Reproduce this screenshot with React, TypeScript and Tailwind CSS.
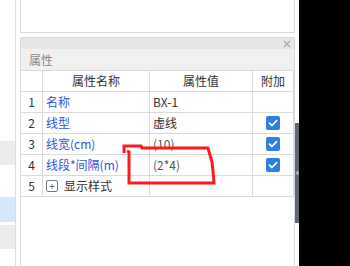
import React from "react";

const font = { fontFamily: '"Noto Sans CJK SC", "Microsoft YaHei", "Liberation Sans", sans-serif' };

function Check() {
  return (
    <div className="w-[14px] h-[14px] rounded-[2px] bg-[#2f7fe0] flex items-center justify-center">
      <svg width="10" height="10" viewBox="0 0 10 10">
        <path d="M1.5 5.2 L4 7.5 L8.6 2.6" stroke="white" strokeWidth="1.7" fill="none" strokeLinecap="round" strokeLinejoin="round" />
      </svg>
    </div>
  );
}

type Row = { n: string; name: React.ReactNode; value: string; check: boolean; valueGray?: boolean };

const rows: Row[] = [
  { n: "1", name: <span className="text-[#2f52e6]">名称</span>, value: "BX-1", check: false },
  { n: "2", name: <span className="text-[#2f52e6]">线型</span>, value: "虚线", check: true },
  { n: "3", name: <span className="text-[#2f52e6]">线宽(cm)</span>, value: "(10)", check: true, valueGray: true },
  { n: "4", name: <span className="text-[#2f52e6]">线段*间隔(m)</span>, value: "(2*4)", check: true, valueGray: true },
  {
    n: "5",
    name: (
      <span className="flex items-center gap-[6px] text-[#333]">
        <span className="w-[12px] h-[12px] border border-[#7a7a7a] rounded-[2px] flex items-center justify-center text-[10px] leading-none text-[#555]">+</span>
        显示样式
      </span>
    ),
    value: "",
    check: false,
  },
];

export default function App() {
  return (
    <div className="relative w-[350px] h-[266px] bg-black flex overflow-hidden text-[12px]" style={font}>
      {/* sidebar */}
      <div className="w-[16px] h-full bg-white border-r border-[#dcdcdc] flex flex-col">
        <div className="h-[141px]" />
        <div className="h-[24px] bg-[#ececec]" />
        <div className="h-[32px]" />
        <div className="h-[25px] bg-[#d5e7fb]" />
        <div className="h-[3px]" />
        <div className="h-[24px] bg-[#ececec]" />
      </div>
      <div className="w-[4px] h-full bg-white" />
      {/* main panel column */}
      <div className="w-[275px] h-full bg-white flex flex-col">
        <div className="h-[33px] border-x border-b border-[#d9d9d9]" />
        <div className="h-[4px]" />
        <div className="flex-1 border-x border-t border-[#d9d9d9] flex flex-col">
          <div className="h-[11px] bg-[#e6e6e6] flex items-center justify-end pr-[3px]">
            <svg width="8" height="8" viewBox="0 0 8 8">
              <path d="M1 1 L7 7 M7 1 L1 7" stroke="#a8a8a8" strokeWidth="1.1" />
            </svg>
          </div>
          <div className="h-[22px] bg-[#f0f0f0] border-b border-[#dadada] flex items-center pl-[8px] text-[#8a8a8a] text-[12px]">
            属性
          </div>
          <div className="w-[273px] text-[#333]">
            <div className="flex h-[21px] border-b border-[#dadada]">
              <div className="w-[22px] border-r border-[#dadada]" />
              <div className="w-[107px] border-r border-[#dadada] flex items-center justify-center">属性名称</div>
              <div className="w-[103px] border-r border-[#dadada] flex items-center justify-center">属性值</div>
              <div className="w-[41px] border-r border-[#dadada] flex items-center justify-center">附加</div>
            </div>
            {rows.map((r) => (
              <div key={r.n} className="flex h-[21px] border-b border-[#dadada]">
                <div className="w-[22px] border-r border-[#dadada] flex items-center justify-center text-[#333]">{r.n}</div>
                <div className="w-[107px] border-r border-[#dadada] flex items-center pl-[3px]">{r.name}</div>
                <div className={`w-[103px] border-r border-[#dadada] flex items-center pl-[3px] ${r.valueGray ? "text-[#555]" : "text-[#333]"}`}>{r.value}</div>
                <div className="w-[41px] border-r border-[#dadada] flex items-center justify-center">{r.check ? <Check /> : null}</div>
              </div>
            ))}
          </div>
        </div>
      </div>
      {/* splitter strip */}
      <div className="w-[4px] h-full bg-white flex flex-col">
        <div className="h-[123px]" />
        <div className="h-[100px] bg-[#5f6a74] flex items-center justify-center">
          <svg width="4" height="6" viewBox="0 0 4 6">
            <path d="M3.5 0.5 L0.5 3 L3.5 5.5 Z" fill="#b9c0c6" />
          </svg>
        </div>
      </div>
      {/* red annotation */}
      <svg className="absolute left-0 top-0 pointer-events-none" width="350" height="266" viewBox="0 0 350 266">
        <path
          d="M124 153 L124 146 L141 146 L142 148 L208 148 L212 162 L213 171 L214 183 L129 183 L129 152 L127 151"
          stroke="#ff1a1a"
          strokeWidth="3"
          fill="none"
          strokeLinejoin="miter"
        />
      </svg>
    </div>
  );
}
